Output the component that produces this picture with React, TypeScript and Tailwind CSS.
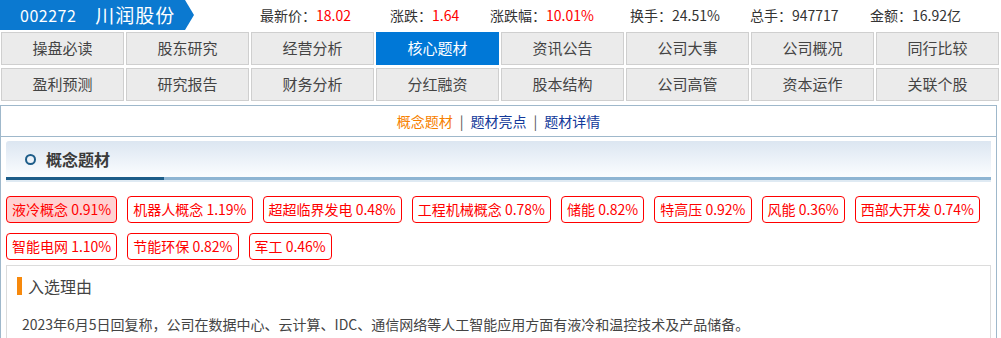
const navRows = [
  ['操盘必读', '股东研究', '经营分析', '核心题材', '资讯公告', '公司大事', '公司概况', '同行比较'],
  ['盈利预测', '研究报告', '财务分析', '分红融资', '股本结构', '公司高管', '资本运作', '关联个股'],
];

const stats = [
  { label: '最新价', value: '18.02', w: 'w-[130px]' },
  { label: '涨跌', value: '1.64', w: 'w-[100px]' },
  { label: '涨跌幅', value: '10.01%', w: 'w-[140px]' },
  { label: '换手', value: '24.51%', w: 'w-[120px]', plain: true },
  { label: '总手', value: '947717', w: 'w-[120px]', plain: true },
  { label: '金额', value: '16.92亿', w: 'w-[120px]', plain: true },
];

const tags = [
  { name: '液冷概念', pct: '0.91%', on: true },
  { name: '机器人概念', pct: '1.19%' },
  { name: '超超临界发电', pct: '0.48%' },
  { name: '工程机械概念', pct: '0.78%' },
  { name: '储能', pct: '0.82%' },
  { name: '特高压', pct: '0.92%' },
  { name: '风能', pct: '0.36%' },
  { name: '西部大开发', pct: '0.74%' },
  { name: '智能电网', pct: '1.10%' },
  { name: '节能环保', pct: '0.82%' },
  { name: '军工', pct: '0.46%' },
];

export default function App() {
  return (
    <div className="w-[1001px] h-[338px] overflow-hidden bg-white text-[#333] font-['SimSun','Noto_Sans_CJK_SC',sans-serif]">
      {/* header */}
      <div className="flex items-center h-[30px]">
        <div className="flex items-center h-[30px] w-[194px] bg-[#0b79d0] text-white [clip-path:polygon(0_0,185px_0,194px_50%,185px_100%,0_100%)]">
          <span className="ml-[20px] text-[16px] tracking-[0.5px]">002272</span>
          <span className="ml-[19px] text-[19px] tracking-[1px]">川润股份</span>
        </div>
        <div className="flex items-center ml-[66px] text-[14px]">
          {stats.map((s) => (
            <div key={s.label} className={`${s.w} whitespace-nowrap`}>
              <span className="text-[#333]">{s.label}：</span>
              <span className={s.plain ? 'text-[#333]' : 'text-[#f00]'}>{s.value}</span>
            </div>
          ))}
        </div>
      </div>

      {/* nav buttons */}
      <div className="mt-[2px] pl-[1px] pr-[2px] flex flex-col gap-[3px]">
        {navRows.map((row, i) => (
          <div key={i} className="grid grid-cols-8 gap-x-[2px]">
            {row.map((n) => (
              <div
                key={n}
                className={
                  n === '核心题材'
                    ? 'h-[33px] flex items-center justify-center text-[15px] bg-[#0078d7] text-white border border-[#0078d7]'
                    : 'h-[33px] flex items-center justify-center text-[15px] bg-[#ebebeb] text-[#444] border border-[#cfcfcf]'
                }
              >
                {n}
              </div>
            ))}
          </div>
        ))}
      </div>

      {/* panel */}
      <div className="mt-[4px] w-[997px] border border-[#9fb8cb] border-b-0">
        <div className="h-[31px] flex items-center justify-center text-[14px] border-b border-[#9fb8cb]">
          <span className="text-[#f77f00]">概念题材</span>
          <span className="mx-[7px] text-[#555]">|</span>
          <span className="text-[#12399a]">题材亮点</span>
          <span className="mx-[7px] text-[#555]">|</span>
          <span className="text-[#12399a]">题材详情</span>
        </div>

        <div className="px-[5px] pt-[4px]">
          <div className="h-[36px] flex items-center bg-gradient-to-b from-[#dce6f1] to-[#fbfdff] rounded-tl-[3px]">
            <span className="ml-[19px] w-[11px] h-[11px] rounded-full border-[2px] border-[#1d5d89]" />
            <span className="ml-[10px] text-[16px] font-bold text-[#3a3a3a]">概念题材</span>
          </div>
          <div className="flex h-[3px]">
            <div className="w-[158px] bg-[#1d5d89]" />
            <div className="flex-1 bg-[#8eb5d3]" />
          </div>
          <div className="h-[2px] bg-[#dfeaf3]" />

          <div className="mt-[14px] flex flex-wrap gap-x-[10px] gap-y-[10px]">
            {tags.map((t) => (
              <div
                key={t.name}
                className={`h-[27px] px-[5px] flex items-center text-[14px] text-[#f00] border border-[#f00] rounded-[4px] whitespace-nowrap ${t.on ? 'bg-[#ffd2d2]' : 'bg-white'}`}
              >
                {t.name}&nbsp;{t.pct}
              </div>
            ))}
          </div>

          <div className="mt-[5px] border border-[#dcdcdc] h-[80px]">
            <div className="mt-[11px] ml-[10px] flex items-center h-[18px]">
              <span className="w-[5px] h-[18px] bg-[#f7890c]" />
              <span className="ml-[6px] text-[16px] text-[#444]">入选理由</span>
            </div>
            <p className="mt-[19px] ml-[15px] text-[14px] text-[#444]">
              2023年6月5日回复称，公司在数据中心、云计算、IDC、通信网络等人工智能应用方面有液冷和温控技术及产品储备。
            </p>
          </div>
        </div>
      </div>
    </div>
  );
}
